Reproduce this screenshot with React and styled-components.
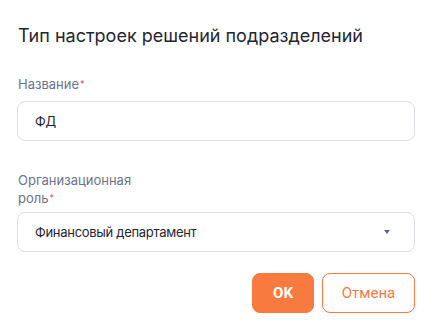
import React from "react";
import styled, {createGlobalStyle} from "styled-components";

const Global = createGlobalStyle`
  body {
    margin: 0;
    background: #fff;
    font-family: "Inter", "Noto Sans", sans-serif;
  }
`;

const Dialog = styled.div`
  width: 437px;
  height: 331px;
  box-sizing: border-box;
  padding: 23px 22px 0 17px;
  display: flex;
  flex-direction: column;
`;

const Title = styled.h2`
  margin: 0 0 0 1px;
  font-size: 18px;
  line-height: 26px;
  font-weight: 400;
  color: #1f2633;
`;

const Field = styled.div`
  display: flex;
  flex-direction: column;
  margin-top: ${(p) => p.$top}px;
`;

const Label = styled.label`
  width: 130px;
  margin-left: 1px;
  font-size: 13px;
  line-height: 18px;
  color: #6b7489;
  margin-bottom: ${(p) => p.$gap}px;
`;

const Star = styled.span`
  color: #ef4444;
  font-size: 9px;
  line-height: 0;
  position: relative;
  top: -2px;
  margin-left: 1px;
`;

const Box = styled.div`
  height: 40px;
  box-sizing: border-box;
  border: 1px solid #dcdfe6;
  border-radius: 8px;
  padding: 0 24px 0 17px;
  display: flex;
  align-items: center;
  justify-content: space-between;
  font-size: 13px;
  letter-spacing: -0.3px;
  color: #1f2633;
`;

const Caret = styled.span`
  width: 0;
  height: 0;
  border-left: 3.5px solid transparent;
  border-right: 3.5px solid transparent;
  border-top: 4px solid #5a6783;
`;

const Actions = styled.div`
  display: flex;
  justify-content: flex-end;
  gap: 8px;
  margin-top: 21px;
`;

const Button = styled.button`
  height: 40px;
  width: ${(p) => p.$w}px;
  box-sizing: border-box;
  border-radius: 8px;
  border: 1px solid #f97a3e;
  background: ${(p) => (p.$primary ? "#f97a3e" : "#fff")};
  color: ${(p) => (p.$primary ? "#fff" : "#f97a3e")};
  font-family: "Roboto", sans-serif;
  font-size: 15px;
  font-weight: ${(p) => (p.$primary ? 700 : 400)};
  padding: 0;
`;

export default function App() {
  return (
    <>
      <Global />
      <Dialog>
        <Title>Тип настроек решений подразделений</Title>
        <Field $top={26}>
          <Label $gap={8}>
            Название<Star>*</Star>
          </Label>
          <Box>ФД</Box>
        </Field>
        <Field $top={30}>
          <Label $gap={5}>
            Организационная роль<Star>*</Star>
          </Label>
          <Box>
            Финансовый департамент
            <Caret />
          </Box>
        </Field>
        <Actions>
          <Button $primary $w={62}>OK</Button>
          <Button $w={93}>Отмена</Button>
        </Actions>
      </Dialog>
    </>
  );
}
